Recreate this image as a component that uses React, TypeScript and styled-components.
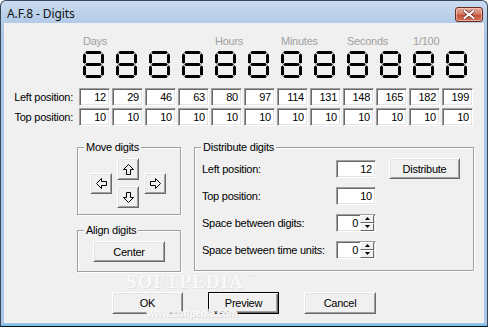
import React from 'react';
import styled, { createGlobalStyle } from 'styled-components';

const GlobalStyle = createGlobalStyle`
  html, body {
    margin: 0;
    padding: 0;
    background: #ffffff;
  }
  body {
    width: 488px;
    height: 327px;
    overflow: hidden;
    font-family: "Liberation Sans", Arial, sans-serif;
  }
`;

const Window = styled.div`
  width: 488px;
  height: 327px;
  box-sizing: border-box;
  border: 1px solid #3a4758;
  border-bottom-color: #0a0f16;
  border-radius: 6px 6px 0 0;
  background: linear-gradient(#cadcf1, #b6cde9 18px, #a9c4e4 40px, #a9c4e4);
  padding: 0 3px 3px;
  display: flex;
  flex-direction: column;
  box-shadow: inset 0 -2px 0 #7cc0e8;
`;

const TitleBar = styled.div`
  height: 22px;
  display: flex;
  align-items: center;
  justify-content: space-between;
  padding: 0 1px 0 3px;
`;

const Title = styled.span`
  font-family: "Noto Sans", "Open Sans", sans-serif;
  font-size: 12px;
  color: #111;
  letter-spacing: -0.1px;
  margin-top: 3px;
`;

const CloseButton = styled.div`
  width: 28px;
  height: 15px;
  box-sizing: border-box;
  margin-top: 4px;
  border: 1px solid #6b2d22;
  border-radius: 3px;
  background: linear-gradient(#e6a697, #d5806b 45%, #c4503a 55%, #d0755b);
  box-shadow: inset 0 0 0 1px rgba(255, 220, 210, 0.55);
  display: flex;
  align-items: center;
  justify-content: center;
`;

const Client = styled.div`
  flex: 1;
  position: relative;
  background: #f0f0f0;
  padding-top: 12px;
  display: flex;
  flex-direction: column;
  font-size: 11px;
  letter-spacing: -0.25px;
  color: #000;
`;

const DigitGrid = styled.div<{ $top: number }>`
  display: grid;
  grid-template-columns: 73px repeat(12, 31px);
  column-gap: 2px;
  margin-top: ${({ $top }) => $top}px;
`;

const UnitLabel = styled.span<{ $col: number }>`
  grid-column: ${({ $col }) => $col + 1} / span 2;
  color: #a0a0a0;
  padding-left: 4px;
  height: 13px;
  line-height: 13px;
  white-space: nowrap;
`;

const DigitCell = styled.div`
  padding-left: 4px;
  height: 27px;
`;

const RowLabel = styled.span`
  grid-column: 1;
  text-align: right;
  padding-right: 4px;
  line-height: 18px;
  white-space: nowrap;
`;

const Field = styled.div<{ $w?: number }>`
  box-sizing: border-box;
  width: ${({ $w }) => ($w ? `${$w}px` : 'auto')};
  height: 18px;
  background: #ffffff;
  border: 1px solid;
  border-color: #a0a0a0 #ffffff #ffffff #a0a0a0;
  box-shadow: inset 1px 1px 0 #696969, inset -1px -1px 0 #e3e3e3;
  text-align: right;
  padding-right: 3px;
  line-height: 16px;
  display: flex;
  justify-content: flex-end;
`;

const Lower = styled.div`
  display: flex;
  gap: 13px;
  margin-top: 21px;
  padding-left: 73px;
`;

const LeftColumn = styled.div`
  display: flex;
  flex-direction: column;
  gap: 15px;
`;

const Group = styled.div<{ $w: number; $h: number }>`
  position: relative;
  box-sizing: border-box;
  width: ${({ $w }) => $w}px;
  height: ${({ $h }) => $h}px;
  border: 1px solid #a0a0a0;
  box-shadow: inset 1px 1px 0 #ffffff, 1px 1px 0 #ffffff;
`;

const Caption = styled.span`
  position: absolute;
  top: -7px;
  left: 6px;
  padding: 0 2px;
  background: #f0f0f0;
  line-height: 13px;
  white-space: nowrap;
`;

const ArrowPad = styled.div`
  display: flex;
  align-items: center;
  justify-content: center;
  gap: 5px;
  padding: 10px 2px 0 0;
`;

const ArrowColumn = styled.div`
  display: flex;
  flex-direction: column;
  gap: 6px;
`;

const Centered = styled.div`
  display: flex;
  justify-content: center;
  padding-top: 10px;
`;

const Button = styled.button<{ $w: number; $h: number; $default?: boolean }>`
  box-sizing: border-box;
  width: ${({ $w }) => $w}px;
  height: ${({ $h }) => $h}px;
  padding: 0;
  margin: 0;
  background: #f0f0f0;
  font-family: "Liberation Sans", Arial, sans-serif;
  font-size: 11px;
  letter-spacing: -0.25px;
  color: #000;
  display: flex;
  align-items: center;
  justify-content: center;
  border: 1px solid;
  ${({ $default }) =>
    $default
      ? `
    border-color: #000;
    box-shadow: inset 1px 1px 0 #fff, inset -1px -1px 0 #696969, inset -2px -2px 0 #a0a0a0;
  `
      : `
    border-color: #fff #696969 #696969 #fff;
    box-shadow: inset 1px 1px 0 #e3e3e3, inset -1px -1px 0 #a0a0a0;
  `}
`;

const DistributeGrid = styled.div`
  display: grid;
  grid-template-columns: 134px 53px 71px;
  grid-auto-rows: 19px;
  row-gap: 8px;
  padding: 11px 0 0 7px;
  align-items: center;
`;

const FormLabel = styled.span`
  white-space: nowrap;
`;

const SpinValue = styled.span`
  padding-right: 2px;
`;

const Spinner = styled.div`
  width: 14px;
  display: flex;
  flex-direction: column;
  margin-right: -2px;
`;

const SpinHalf = styled.div`
  flex: 1;
  box-sizing: border-box;
  background: #f0f0f0;
  border: 1px solid;
  border-color: #fff #696969 #696969 #fff;
  display: flex;
  align-items: center;
  justify-content: center;
`;

const ButtonRow = styled.div`
  display: flex;
  gap: 25px;
  padding-left: 108px;
  margin-top: 20px;
`;

const Watermark = styled.div`
  position: absolute;
  left: 122px;
  top: 248px;
  pointer-events: none;
  font-family: "Liberation Serif", "DejaVu Serif", serif;
  font-weight: bold;
  font-size: 19px;
  letter-spacing: 1px;
  color: rgba(255, 255, 255, 0.8);
  text-shadow: 1px 1px 0 #e3e3e3, -1px -1px 0 #eaeaea;
`;

const Trademark = styled.sup`
  font-size: 7px;
  font-family: "Liberation Sans", sans-serif;
  vertical-align: 10px;
  margin-left: 3px;
`;

const WatermarkUrl = styled.div`
  position: absolute;
  left: 143px;
  top: 285px;
  pointer-events: none;
  font-family: "Liberation Sans", sans-serif;
  font-weight: bold;
  font-size: 10px;
  letter-spacing: -0.2px;
  color: rgba(255, 255, 255, 0.9);
  text-shadow: 1px 1px 0 #dcdcdc, -1px 0 0 #e6e6e6;
`;

// seven segment "8"
const T = 3;
const G = 0.7;
const hseg = (x1: number, x2: number, y: number) => {
  const h = T / 2;
  return `${x1 + G},${y} ${x1 + G + h},${y - h} ${x2 - G - h},${y - h} ${x2 - G},${y} ${x2 - G - h},${y + h} ${x1 + G + h},${y + h}`;
};
const vseg = (x: number, y1: number, y2: number) => {
  const h = T / 2;
  return `${x},${y1 + G} ${x + h},${y1 + G + h} ${x + h},${y2 - G - h} ${x},${y2 - G} ${x - h},${y2 - G - h} ${x - h},${y1 + G + h}`;
};
const SEGMENTS = [
  hseg(1.5, 19.5, 1.5),
  hseg(1.5, 19.5, 13.5),
  hseg(1.5, 19.5, 25.5),
  vseg(1.5, 1.5, 13.5),
  vseg(19.5, 1.5, 13.5),
  vseg(1.5, 13.5, 25.5),
  vseg(19.5, 13.5, 25.5),
];

const SevenSeg = () => (
  <svg width="21" height="27" viewBox="0 0 21 27">
    {SEGMENTS.map((p, i) => (
      <polygon key={i} points={p} fill="#000" />
    ))}
  </svg>
);

const ARROWS: Record<string, string> = {
  up: '5.5,0.5 0.5,5.5 3.5,5.5 3.5,10.5 7.5,10.5 7.5,5.5 10.5,5.5',
  down: '5.5,10.5 0.5,5.5 3.5,5.5 3.5,0.5 7.5,0.5 7.5,5.5 10.5,5.5',
  left: '0.5,5.5 5.5,0.5 5.5,3.5 10.5,3.5 10.5,7.5 5.5,7.5 5.5,10.5',
  right: '10.5,5.5 5.5,0.5 5.5,3.5 0.5,3.5 0.5,7.5 5.5,7.5 5.5,10.5',
};

const Arrow = ({ dir }: { dir: string }) => (
  <svg width="11" height="11" viewBox="0 0 11 11">
    <polygon points={ARROWS[dir]} fill="none" stroke="#000" strokeWidth="1" />
  </svg>
);

const Tri = ({ up }: { up?: boolean }) => (
  <svg width="5" height="3" viewBox="0 0 5 3">
    <polygon points={up ? '2.5,0 5,3 0,3' : '0,0 5,0 2.5,3'} fill="#000" />
  </svg>
);

const CloseGlyph = () => (
  <svg width="12" height="9" viewBox="0 0 12 9">
    <path d="M1.5 1 L10.5 8 M10.5 1 L1.5 8" stroke="#5a2a20" strokeWidth="3.4" strokeLinecap="square" />
    <path d="M1.5 1 L10.5 8 M10.5 1 L1.5 8" stroke="#ffffff" strokeWidth="2" strokeLinecap="square" />
  </svg>
);

const SpinBox = ({ value }: { value: number }) => (
  <Field $w={40}>
    <SpinValue>{value}</SpinValue>
    <Spinner>
      <SpinHalf>
        <Tri up />
      </SpinHalf>
      <SpinHalf>
        <Tri />
      </SpinHalf>
    </Spinner>
  </Field>
);

const units = [
  { label: 'Days', col: 1 },
  { label: 'Hours', col: 5 },
  { label: 'Minutes', col: 7 },
  { label: 'Seconds', col: 9 },
  { label: '1/100', col: 11 },
];
const lefts = [12, 29, 46, 63, 80, 97, 114, 131, 148, 165, 182, 199];

export default function App() {
  return (
    <>
      <GlobalStyle />
      <Window>
        <TitleBar>
          <Title>A.F.8 - Digits</Title>
          <CloseButton>
            <CloseGlyph />
          </CloseButton>
        </TitleBar>
        <Client>
          <DigitGrid $top={0}>
            {units.map((u) => (
              <UnitLabel key={u.label} $col={u.col}>
                {u.label}
              </UnitLabel>
            ))}
          </DigitGrid>
          <DigitGrid $top={3}>
            <span />
            {lefts.map((l) => (
              <DigitCell key={l}>
                <SevenSeg />
              </DigitCell>
            ))}
          </DigitGrid>
          <DigitGrid $top={10}>
            <RowLabel>Left position:</RowLabel>
            {lefts.map((l) => (
              <Field key={l}>{l}</Field>
            ))}
          </DigitGrid>
          <DigitGrid $top={2}>
            <RowLabel>Top position:</RowLabel>
            {lefts.map((l) => (
              <Field key={l}>10</Field>
            ))}
          </DigitGrid>

          <Lower>
            <LeftColumn>
              <Group $w={104} $h={68}>
                <Caption>Move digits</Caption>
                <ArrowPad>
                  <Button $w={22} $h={21}>
                    <Arrow dir="left" />
                  </Button>
                  <ArrowColumn>
                    <Button $w={22} $h={22}>
                      <Arrow dir="up" />
                    </Button>
                    <Button $w={22} $h={22}>
                      <Arrow dir="down" />
                    </Button>
                  </ArrowColumn>
                  <Button $w={22} $h={21}>
                    <Arrow dir="right" />
                  </Button>
                </ArrowPad>
              </Group>
              <Group $w={104} $h={42}>
                <Caption>Align digits</Caption>
                <Centered>
                  <Button $w={72} $h={21}>
                    Center
                  </Button>
                </Centered>
              </Group>
            </LeftColumn>
            <Group $w={280} $h={124}>
              <Caption>Distribute digits</Caption>
              <DistributeGrid>
                <FormLabel>Left position:</FormLabel>
                <Field $w={40}>12</Field>
                <Button $w={71} $h={21}>
                  Distribute
                </Button>
                <FormLabel>Top position:</FormLabel>
                <Field $w={40}>10</Field>
                <span />
                <FormLabel>Space between digits:</FormLabel>
                <SpinBox value={0} />
                <span />
                <FormLabel>Space between time units:</FormLabel>
                <SpinBox value={0} />
              </DistributeGrid>
            </Group>
          </Lower>

          <ButtonRow>
            <Button $w={71} $h={22}>
              OK
            </Button>
            <Button $w={71} $h={22} $default>
              Preview
            </Button>
            <Button $w={72} $h={22}>
              Cancel
            </Button>
          </ButtonRow>

          <Watermark>
            SOFTPEDIA<Trademark>™</Trademark>
          </Watermark>
          <WatermarkUrl>www.softpedia.com</WatermarkUrl>
        </Client>
      </Window>
    </>
  );
}
